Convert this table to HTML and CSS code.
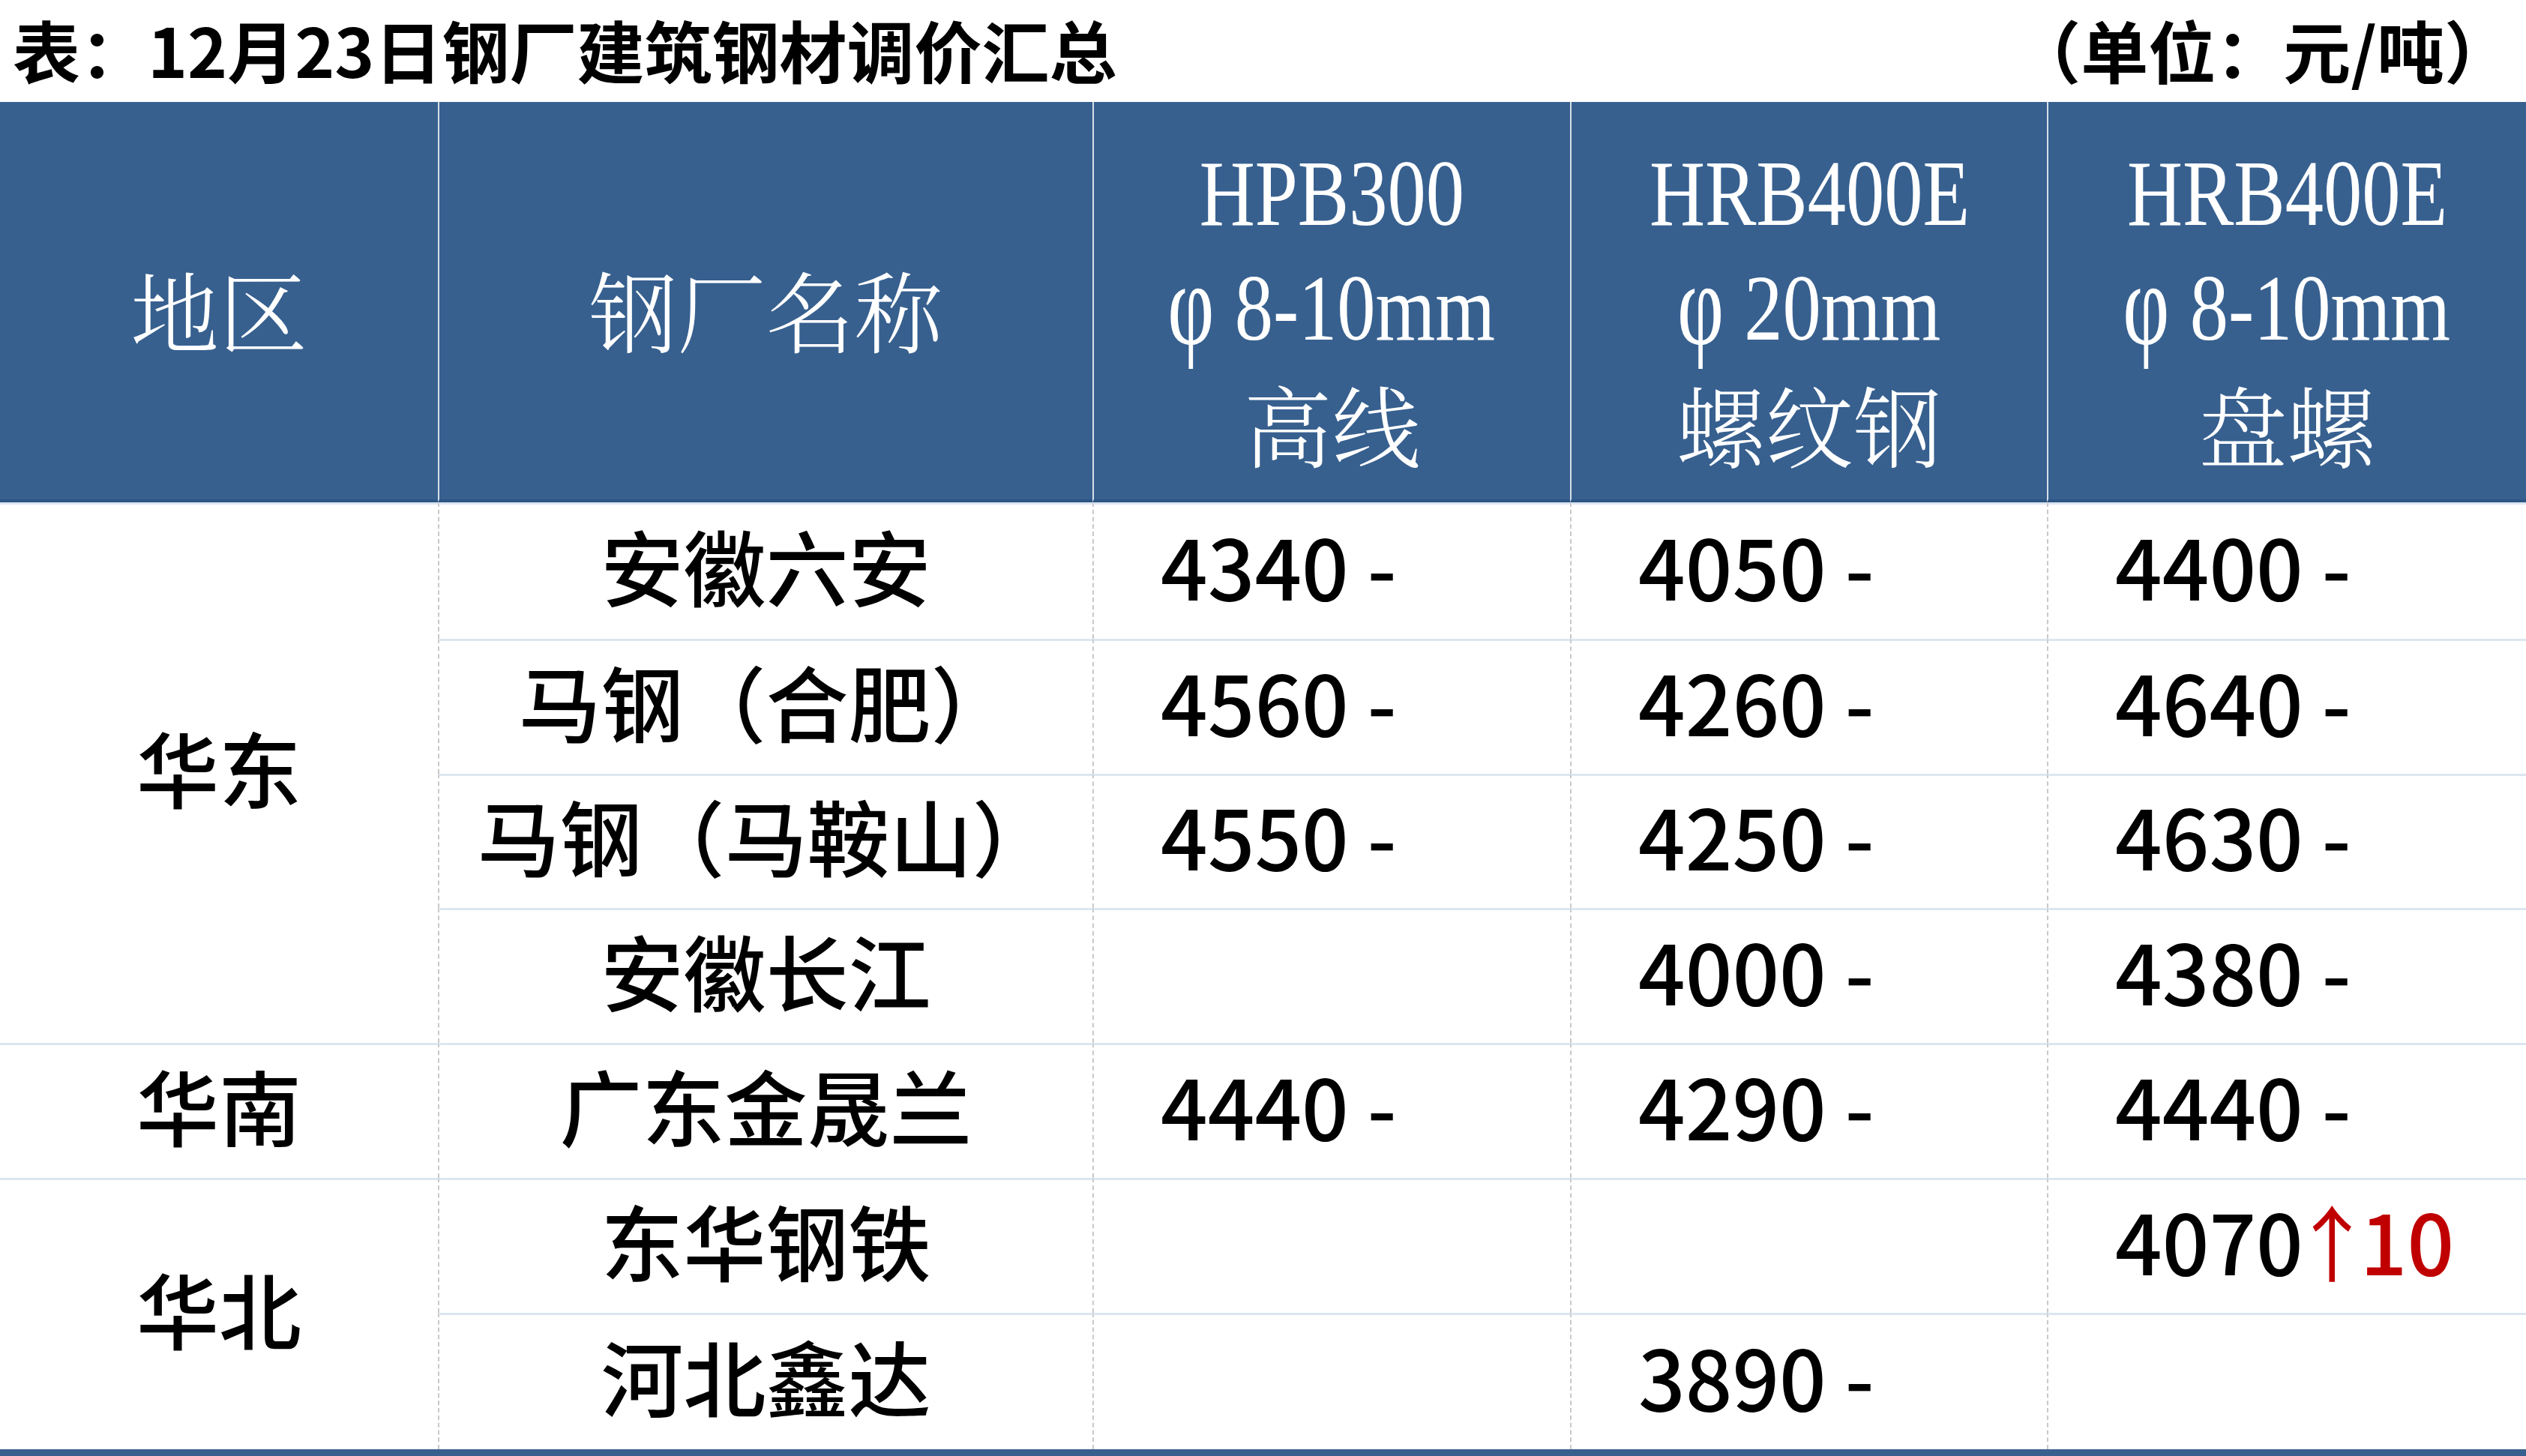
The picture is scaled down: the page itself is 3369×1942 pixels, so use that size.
FILE: index.html
```html
<!DOCTYPE html>
<html lang="zh-CN">
<head>
<meta charset="utf-8">
<title>12月23日钢厂建筑钢材调价汇总</title>
<link rel="stylesheet" href="styles.css">
</head>
<body>
<div class="sheet">
  <div class="caption">
    <span class="title">表：12月23日钢厂建筑钢材调价汇总</span>
    <span class="unit">（单位：元/吨）</span>
  </div>

  <div class="th first"><div class="ln">地区</div></div>
  <div class="th"><div class="ln">钢厂名称</div></div>
  <div class="th">
    <div class="ln lat">HPB300</div>
    <div class="ln lat"><span class="phi">φ</span>8-10mm</div>
    <div class="ln">高线</div>
  </div>
  <div class="th">
    <div class="ln lat">HRB400E</div>
    <div class="ln lat"><span class="phi">φ</span>20mm</div>
    <div class="ln">螺纹钢</div>
  </div>
  <div class="th">
    <div class="ln lat">HRB400E</div>
    <div class="ln lat"><span class="phi">φ</span>8-10mm</div>
    <div class="ln">盘螺</div>
  </div>

  <div class="td region span4">华东</div>
  <div class="td name">安徽六安</div>
  <div class="td num">4340 -</div>
  <div class="td num">4050 -</div>
  <div class="td num">4400 -</div>

  <div class="td name">马钢（合肥）</div>
  <div class="td num">4560 -</div>
  <div class="td num">4260 -</div>
  <div class="td num">4640 -</div>

  <div class="td name">马钢（马鞍山）</div>
  <div class="td num">4550 -</div>
  <div class="td num">4250 -</div>
  <div class="td num">4630 -</div>

  <div class="td name">安徽长江</div>
  <div class="td num"></div>
  <div class="td num">4000 -</div>
  <div class="td num">4380 -</div>

  <div class="td region">华南</div>
  <div class="td name">广东金晟兰</div>
  <div class="td num">4440 -</div>
  <div class="td num">4290 -</div>
  <div class="td num">4440 -</div>

  <div class="td region span2">华北</div>
  <div class="td name">东华钢铁</div>
  <div class="td num"></div>
  <div class="td num"></div>
  <div class="td num">4070<span class="up"><span class="arrow">↑</span>10</span></div>

  <div class="td name">河北鑫达</div>
  <div class="td num"></div>
  <div class="td num">3890 -</div>
  <div class="td num"></div>

  <div class="foot"></div>
</div>
</body>
</html>
```

FILE: styles.css
```css
html, body {
  margin: 0;
  padding: 0;
  background: #ffffff;
}

.sheet {
  width: 3369px;
  height: 1942px;
  display: grid;
  grid-template-columns: 584px 873px 637px 636px 639px;
  grid-template-rows: 136px 534px 182px 180px 179px 180px 180px 180px 182px 9px;
  font-family: "Noto Sans CJK SC", sans-serif;
  overflow: hidden;
}

.caption {
  grid-column: 1 / -1;
  display: flex;
  justify-content: space-between;
  align-items: center;
  padding: 0 19px 6px 17px;
  font-size: 90px;
  font-weight: 700;
  line-height: 1;
  color: #000000;
  white-space: nowrap;
}

.th {
  background: #37608f;
  color: #ffffff;
  border-bottom: 4px solid #2c5584;
  border-left: 2px solid rgba(255, 255, 255, 0.8);
  display: flex;
  flex-direction: column;
  align-items: center;
  justify-content: center;
  padding-top: 20px;
  font-family: "Noto Serif CJK SC", "Noto Sans CJK SC", serif;
  font-weight: 300;
  font-size: 118px;
}

.th.first {
  border-left: none;
}

.ln {
  height: 153px;
  line-height: 153px;
  white-space: nowrap;
}

.lat {
  font-family: "Liberation Serif", serif;
  font-weight: 400;
  font-size: 125px;
  transform: scaleX(0.82);
}

.phi {
  display: inline-block;
  margin-right: 0.28em;
  transform: scale(1.05, 1.25);
  transform-origin: center 62%;
}

.td {
  border-top: 3px solid #dce6f1;
  display: flex;
  align-items: center;
  padding-bottom: 20px;
  font-size: 110px;
  font-weight: 500;
  line-height: 1;
  color: #000000;
  white-space: nowrap;
  min-width: 0;
}

.region {
  justify-content: center;
}

.name {
  justify-content: center;
  border-left: 2px dashed #c9c9c9;
}

.num {
  padding-left: 89px;
  border-left: 2px dashed #c9c9c9;
}

.span4 {
  grid-row: span 4;
}

.span2 {
  grid-row: span 2;
}

.up {
  color: #c00000;
  font-weight: 500;
}

.arrow {
  font-weight: 400;
  margin-left: -0.15em;
  letter-spacing: -0.16em;
}

.foot {
  grid-column: 1 / -1;
  background: #37608f;
}
```
